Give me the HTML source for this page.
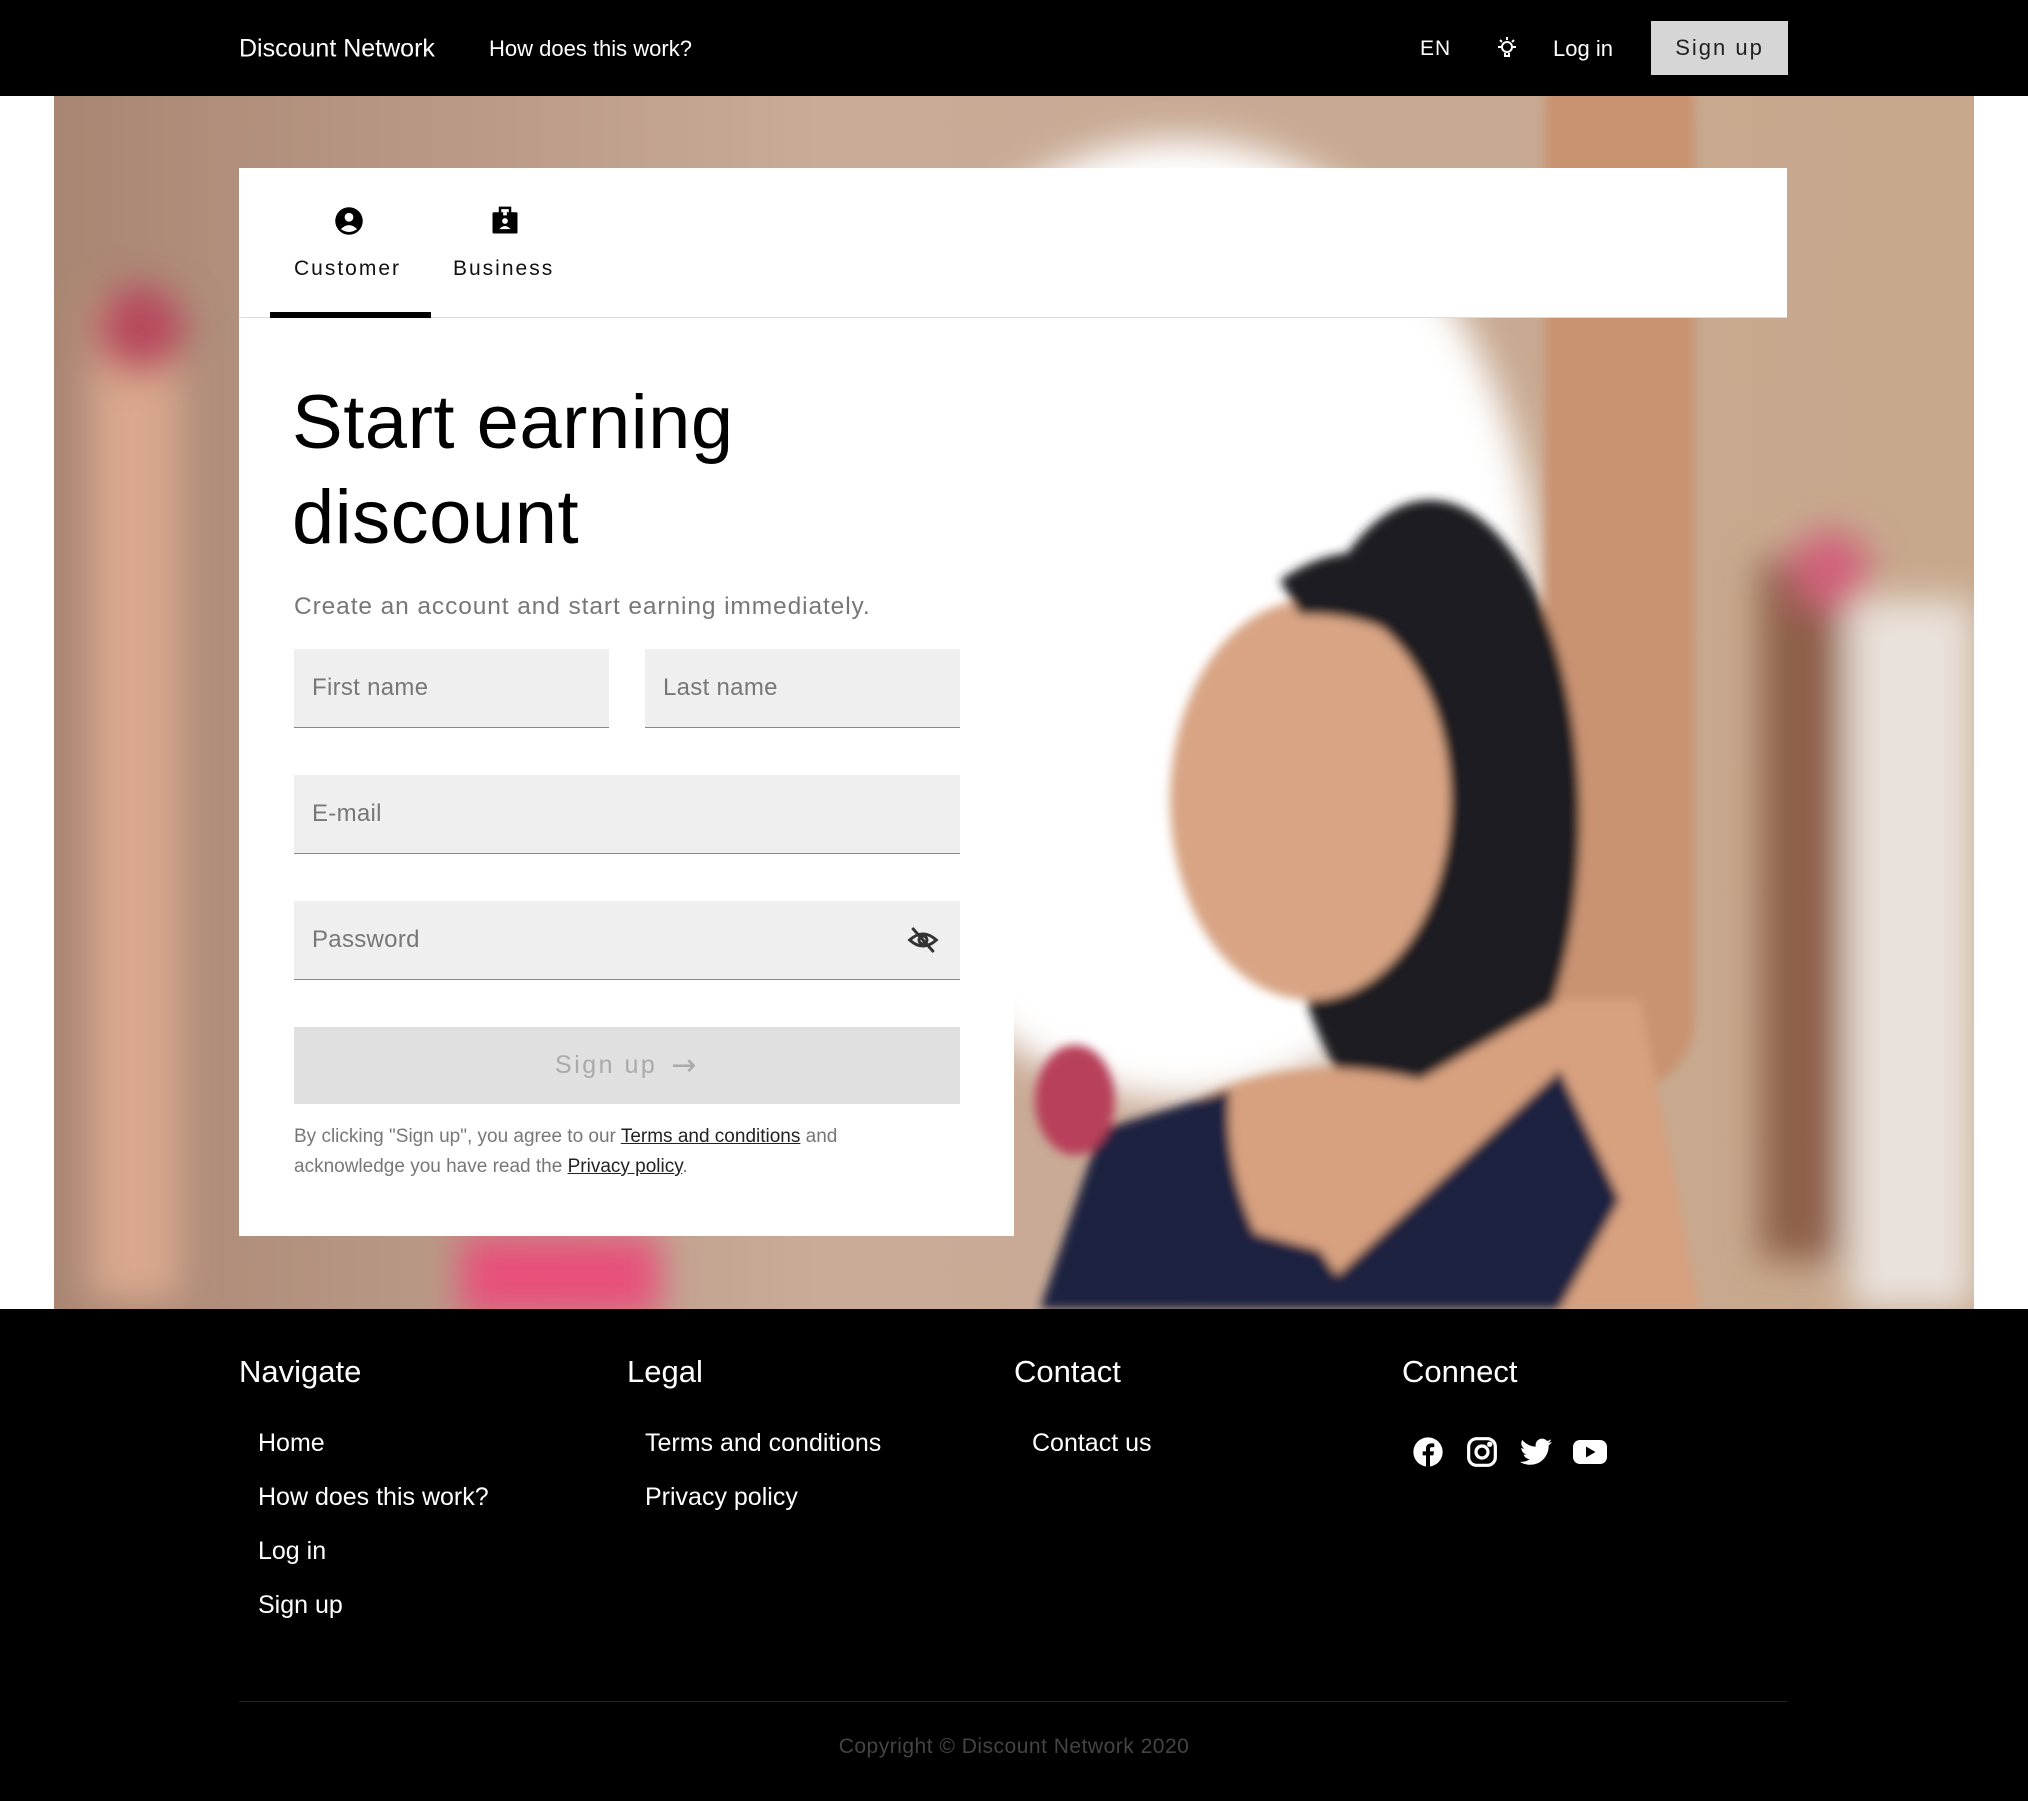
<!DOCTYPE html>
<html><head><meta charset="utf-8"><style>
*{margin:0;padding:0;box-sizing:border-box}
body{width:2028px;height:1801px;background:#fff;font-family:"Liberation Sans",sans-serif;position:relative;overflow:hidden}
.a{position:absolute}
.hdr{left:0;top:0;width:2028px;height:96px;background:#000;color:#fff}
.hdr span{position:absolute;top:49px;transform:translateY(-50%);font-size:22px}
.inp{position:absolute;background:#efefef;border-bottom:1.5px solid #888;color:#777;font-size:24px;padding-left:18px;display:flex;align-items:center;letter-spacing:.3px}
.fh{position:absolute;font-size:31px;color:#fff}
.fl{position:absolute;font-size:25px;color:#fff}
</style></head><body>
<div class="a hdr">
<span style="left:239px;font-size:25px">Discount Network</span>
<span style="left:489px;font-size:22px">How does this work?</span>
<span style="left:1420px;font-size:21px;letter-spacing:1px">EN</span>
<svg class="a" style="left:1494px;top:35px" width="26" height="26" viewBox="0 0 26 26" fill="none" stroke="#fff" stroke-width="2"><circle cx="13" cy="12" r="5"/><path d="M11 18v3h4v-3M13 2v3M4 12h3M19 12h3M6 5l2 2M20 5l-2 2"/></svg>
<span style="left:1553px;font-size:22px">Log in</span>
<div class="a" style="left:1651px;top:21px;width:137px;height:54px;background:#d6d6d6;color:#222;font-size:22px;letter-spacing:2px;display:flex;align-items:center;justify-content:center">Sign up</div>
</div>
<svg class="a" style="left:54px;top:96px" width="1920" height="1213" viewBox="54 96 1920 1213">
<defs>
<linearGradient id="bg" x1="0" y1="0" x2="1" y2="0"><stop offset="0" stop-color="#a98673"/><stop offset=".4" stop-color="#c9ab98"/><stop offset="1" stop-color="#c7a88c"/></linearGradient>
<filter id="bl"><feGaussianBlur stdDeviation="18"/></filter>
<filter id="sb"><feGaussianBlur stdDeviation="5"/></filter>
</defs>
<rect x="54" y="96" width="1920" height="1213" fill="url(#bg)"/>
<g filter="url(#bl)">
<rect x="90" y="300" width="90" height="1000" fill="#d9a78e"/>
<circle cx="140" cy="330" r="45" fill="#b84a5e"/>
<rect x="460" y="1236" width="200" height="80" fill="#e8507a"/>
<rect x="1850" y="600" width="124" height="709" fill="#e9e2dc"/>
<rect x="1760" y="560" width="80" height="700" fill="#8e5e48"/>
<circle cx="1830" cy="570" r="40" fill="#d0607a"/>
</g>
<ellipse cx="1180" cy="620" rx="360" ry="480" fill="#fff" filter="url(#bl)"/>
<g filter="url(#sb)">
<rect x="1545" y="40" width="150" height="1050" rx="70" fill="#c99372"/>
<ellipse cx="1430" cy="820" rx="150" ry="320" fill="#1a1a22"/>
<ellipse cx="1310" cy="800" rx="140" ry="200" fill="#d8a484"/>
<path d="M1280 580 Q1380 510 1470 620 L1480 700 Q1400 610 1300 615 Z" fill="#1a1a22"/>
<path d="M1100 1309 L1140 1140 Q1250 1040 1420 1080 L1560 1000 L1640 1000 L1700 1309 Z" fill="#d7a07f"/>
<path d="M1040 1309 L1100 1130 L1230 1090 Q1220 1200 1300 1309 Z M1300 1309 L1560 1070 L1620 1200 L1560 1309 Z" fill="#1f2240"/>
<path d="M1110 1309 L1130 1200 L1320 1250 L1360 1309Z" fill="#1f2240"/>
<ellipse cx="1075" cy="1100" rx="40" ry="55" fill="#b8405a"/>
</g>
</svg>
<div class="a" style="left:239px;top:168px;width:1548px;height:150px;background:#fff;border-bottom:1px solid #ddd"></div>
<svg class="a" style="left:334px;top:206px" width="30" height="30" viewBox="0 0 24 24"><circle cx="12" cy="12" r="11" fill="#000"/><circle cx="12" cy="9" r="3.5" fill="#fff"/><path d="M5.5 18.5 Q12 12 18.5 18.5 Q12 23 5.5 18.5Z" fill="#fff"/></svg>
<svg class="a" style="left:489px;top:206px" width="32" height="30" viewBox="0 0 24 24"><rect x="2" y="5" width="20" height="17" rx="1" fill="#000"/><rect x="8" y="1.5" width="8" height="5" fill="none" stroke="#000" stroke-width="2"/><rect x="10.5" y="5" width="3" height="2.5" fill="#fff"/><circle cx="12" cy="12" r="2.3" fill="#fff"/><path d="M7.5 18.5 Q12 13.5 16.5 18.5Z" fill="#fff"/></svg>
<div class="a" style="left:294px;top:257px;font-size:21px;letter-spacing:2px;color:#111">Customer</div>
<div class="a" style="left:453px;top:257px;font-size:21px;letter-spacing:2px;color:#111">Business</div>
<div class="a" style="left:270px;top:312px;width:161px;height:6px;background:#000"></div>
<div class="a" style="left:239px;top:318px;width:775px;height:918px;background:#fff"></div>
<div class="a" style="left:292px;top:375px;font-size:76px;line-height:95px;color:#000;letter-spacing:.5px">Start earning<br>discount</div>
<div class="a" style="left:294px;top:593px;font-size:24.5px;color:#777;letter-spacing:.9px">Create an account and start earning immediately.</div>
<div class="inp" style="left:294px;top:649px;width:315px;height:79px">First name</div>
<div class="inp" style="left:645px;top:649px;width:315px;height:79px">Last name</div>
<div class="inp" style="left:294px;top:775px;width:666px;height:79px">E-mail</div>
<div class="inp" style="left:294px;top:901px;width:666px;height:79px">Password</div>
<svg class="a" style="left:906px;top:924px" width="34" height="32" viewBox="0 0 24 24" fill="none" stroke="#333" stroke-width="2.2"><path d="M2 12 Q12 3 22 12 Q12 21 2 12Z"/><circle cx="12" cy="12" r="3"/><path d="M4 3 L20 21"/></svg>
<div class="a" style="left:294px;top:1027px;width:666px;height:77px;background:#e0e0e0;color:#aaa;font-size:25px;letter-spacing:2.5px;display:flex;align-items:center;justify-content:center">Sign up <span style="margin-left:14px;font-size:30px;font-family:'DejaVu Sans',sans-serif">→</span></div>
<div class="a" style="left:294px;top:1122px;font-size:19px;line-height:30px;color:#777">By clicking "Sign up", you agree to our <u style="color:#222">Terms and conditions</u> and<br>acknowledge you have read the <u style="color:#222">Privacy policy</u>.</div>
<div class="a" style="left:0;top:1309px;width:2028px;height:492px;background:#000"></div>
<div class="fh" style="left:239px;top:1354px">Navigate</div>
<div class="fh" style="left:627px;top:1354px">Legal</div>
<div class="fh" style="left:1014px;top:1354px">Contact</div>
<div class="fh" style="left:1402px;top:1354px">Connect</div>
<div class="fl" style="left:258px;top:1429px">Home</div>
<div class="fl" style="left:258px;top:1483px">How does this work?</div>
<div class="fl" style="left:258px;top:1537px">Log in</div>
<div class="fl" style="left:258px;top:1591px">Sign up</div>
<div class="fl" style="left:645px;top:1429px">Terms and conditions</div>
<div class="fl" style="left:645px;top:1483px">Privacy policy</div>
<div class="fl" style="left:1032px;top:1429px">Contact us</div>
<svg class="a" style="left:1412px;top:1436px" width="32" height="32" viewBox="0 0 24 24"><circle cx="12" cy="12" r="11" fill="#fff"/><path d="M13.5 23V14.5H16l.5-3h-3V9.8c0-.9.3-1.5 1.6-1.5h1.6V5.6c-.3 0-1.2-.1-2.3-.1-2.3 0-3.9 1.4-3.9 4v2H8v3h2.5V23Z" fill="#000"/></svg>
<svg class="a" style="left:1466px;top:1436px" width="32" height="32" viewBox="0 0 24 24" fill="none" stroke="#fff" stroke-width="2.4"><rect x="2" y="2" width="20" height="20" rx="6"/><circle cx="12" cy="12" r="4.5"/><circle cx="17.8" cy="6.2" r=".8" fill="#fff"/></svg>
<svg class="a" style="left:1520px;top:1438px" width="32" height="28" viewBox="0 0 24 20"><path d="M24 2.4c-.9.4-1.8.6-2.8.8 1-.6 1.8-1.6 2.2-2.7-1 .6-2 1-3.1 1.2C19.3.7 18 0 16.6 0c-2.7 0-4.9 2.2-4.9 4.9 0 .4 0 .8.1 1.1C7.7 5.8 4.1 3.9 1.7.9c-.4.7-.7 1.600-.7 2.5 0 1.7.9 3.2 2.2 4.1-.8 0-1.6-.2-2.2-.6v.1c0 2.4 1.7 4.4 3.9 4.8-.4.1-.8.2-1.3.2-.3 0-.6 0-.9-.1.6 2 2.4 3.4 4.6 3.4-1.700 1.3-3.8 2.1-6.1 2.1H0c2.2 1.4 4.8 2.2 7.5 2.2 9.1 0 14-7.5 14-14v-.6c1-.7 1.8-1.6 2.5-2.6z" fill="#fff"/></svg>
<svg class="a" style="left:1573px;top:1440px" width="34" height="24" viewBox="0 0 34 24"><rect x="0" y="0" width="34" height="24" rx="7" fill="#fff"/><path d="M13 6.5v11l9.5-5.5z" fill="#000"/></svg>
<div class="a" style="left:239px;top:1701px;width:1548px;height:1px;background:#222"></div>
<div class="a" style="left:0;top:1735px;width:2028px;text-align:center;font-size:21px;color:#444;letter-spacing:.5px">Copyright © Discount Network 2020</div>
</body></html>
